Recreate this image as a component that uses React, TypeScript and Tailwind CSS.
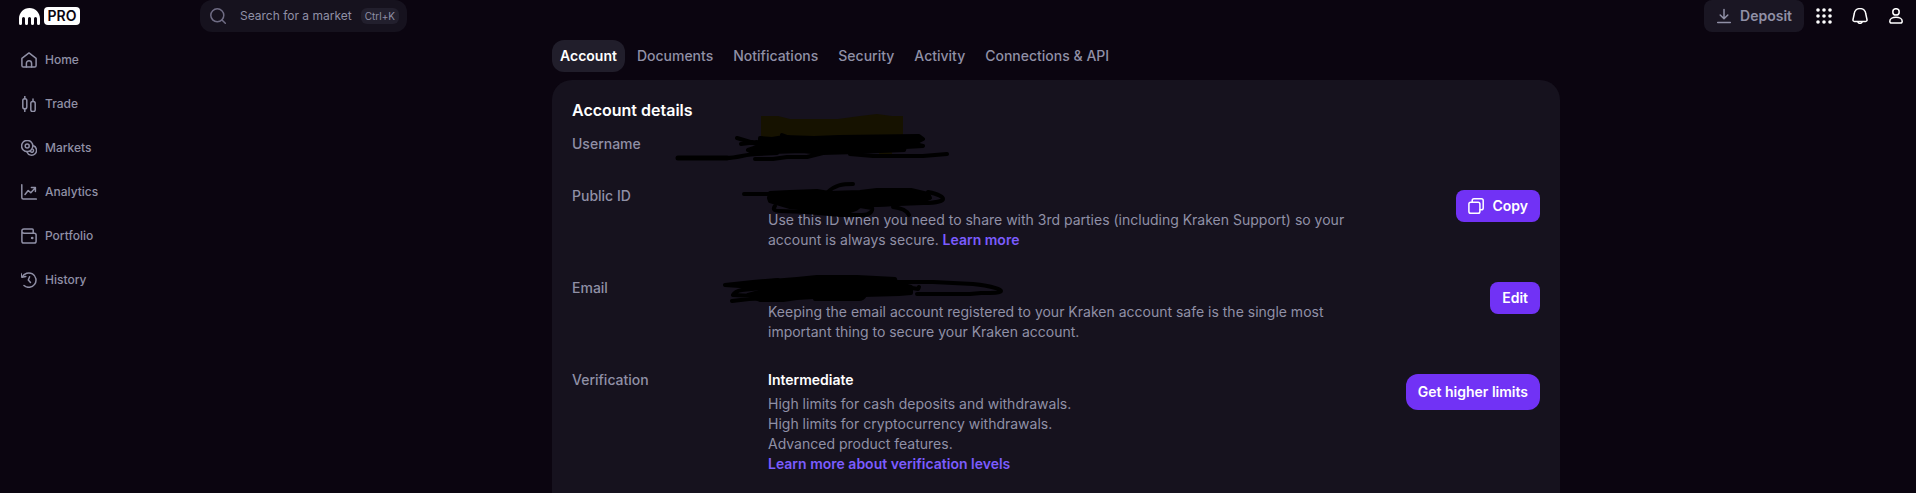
import React from "react";

type IconProps = { className?: string };

const line = {
  viewBox: "0 0 16 16",
  fill: "none",
  stroke: "currentColor",
  strokeWidth: 1.5,
  strokeLinecap: "round" as const,
  strokeLinejoin: "round" as const,
  "aria-hidden": true,
};

function HomeIcon({ className }: IconProps) {
  return (
    <svg {...line} className={className}>
      <path d="M.9 6.3 8 .9l7.100 5.400v7.200c0 .9-.6 1.600-1.500 1.600H2.400c-.9 0-1.500-.7-1.500-1.600z" />
      <path d="M5.400 15v-3.600a2.600 2.600 0 0 1 5.200 0V15" />
    </svg>
  );
}

function TradeIcon({ className }: IconProps) {
  return (
    <svg {...line} className={className}>
      <rect x="1.8" y="2.8" width="4" height="10" rx="1.8" />
      <path d="M3.8 0v2.800M3.800 12.800V15.500" />
      <rect x="9.8" y="5.6" width="4.4" height="10" rx="1.8" />
      <path d="M12 3v2.600" />
    </svg>
  );
}

function MarketsIcon({ className }: IconProps) {
  return (
    <svg {...line} className={className}>
      <circle cx="6.2" cy="6" r="5.6" />
      <circle cx="6.2" cy="6" r="2" />
      <path d="M12.500 5.800a4.900 4.900 0 1 1-6.400 6.400" />
      <path d="M11.900 9.400a1.600 1.600 0 1 1-2.400 2" />
    </svg>
  );
}

function AnalyticsIcon({ className }: IconProps) {
  return (
    <svg {...line} className={className}>
      <path d="M.8 .8v12.800c0 .9.6 1.500 1.500 1.500h13" />
      <path d="m4 10.500 3.200-4 2.600 2.300 4.600-5M10.400 3.600h4v4" />
    </svg>
  );
}

function PortfolioIcon({ className }: IconProps) {
  return (
    <svg {...line} className={className}>
      <path d="M.9 3v10.300c0 1 .8 1.800 1.800 1.800h10.600c1 0 1.800-.8 1.800-1.800V7c0-1-.8-1.800-1.800-1.800H3A2.100 2.100 0 0 1 3 .9h8.200c.6 0 1 .4 1 1v3.300" />
      <circle cx="11.2" cy="10" r=".6" fill="currentColor" />
    </svg>
  );
}

function HistoryIcon({ className }: IconProps) {
  return (
    <svg {...line} className={className}>
      <path d="M1.300 5A7.200 7.200 0 1 1 3 13.500" />
      <path d="M0 1.600 1 5.300l3.800-.8" />
      <path d="M8.600 4.800 7.300 8l2.200 2.500" />
    </svg>
  );
}

function SearchIcon({ className }: IconProps) {
  return (
    <svg {...line} className={className}>
      <circle cx="7.3" cy="7.3" r="6.5" />
      <path d="m12 12 3.300 3.300" />
    </svg>
  );
}

function DepositIcon({ className }: IconProps) {
  return (
    <svg {...line} className={className}>
      <path d="M8 1.500v9M4.200 7 8 10.800 11.800 7M1.700 14.500h12.600" />
    </svg>
  );
}

function GridIcon({ className }: IconProps) {
  return (
    <svg viewBox="0 0 16 16" fill="currentColor" className={className} aria-hidden>
      {[2, 8, 14].map((y) => [2, 8, 14].map((x) => <circle key={`${x}-${y}`} cx={x} cy={y} r="1.8" />))}
    </svg>
  );
}

function BellIcon({ className }: IconProps) {
  return (
    <svg {...line} className={className}>
      <path d="M8 .6c-3.300 0-5.600 2.300-5.800 5.400L1 11.600c-.2 1 .4 1.800 1.400 1.800h11.200c1 0 1.600-.8 1.400-1.800L13.800 6C13.600 2.900 11.300.6 8 .6z" />
      <path d="M5.800 13.800c.4 1.100 1.200 1.600 2.200 1.600s1.800-.5 2.200-1.600" />
    </svg>
  );
}

function ProfileIcon({ className }: IconProps) {
  return (
    <svg {...line} className={className}>
      <circle cx="8" cy="3.9" r="3.2" />
      <path d="M1.800 13.300c0-2.300 2.700-4 6.200-4s6.200 1.700 6.200 4c0 1.100-.7 1.800-1.700 1.800h-9c-1 0-1.700-.7-1.700-1.800z" />
    </svg>
  );
}

function CopyIcon({ className }: IconProps) {
  return (
    <svg {...line} className={className}>
      <rect x=".9" y="4.2" width="11" height="11" rx="1.8" />
      <path d="M4.200 4V2.600c0-1 .8-1.800 1.800-1.800h7.400c1 0 1.800.8 1.800 1.800V10c0 1-.8 1.800-1.800 1.800H12" />
    </svg>
  );
}

function Logo() {
  return (
    <a href="#" aria-label="Kraken Pro" className="flex items-center gap-1">
      <svg viewBox="0 0 21 17" className="h-[17px] w-[21px]" fill="#fff" aria-hidden>
        <path d="M10.500 0C4.700 0 0 4.700 0 10.500v5a1.500 1.500 0 0 0 3 0v-5a1.500 1.500 0 0 1 3 0v5a1.500 1.500 0 0 0 3 0v-5a1.500 1.500 0 0 1 3 0v5a1.500 1.500 0 0 0 3 0v-5a1.500 1.500 0 0 1 3 0v5a1.500 1.500 0 0 0 3 0v-5C21 4.700 16.300 0 10.500 0z" />
      </svg>
      <span className="flex h-[18px] w-9 items-center justify-center rounded-sm bg-white text-sm font-semibold text-[#0b0510]">PRO</span>
    </a>
  );
}

const menu = [
  { label: "Home", Icon: HomeIcon },
  { label: "Trade", Icon: TradeIcon },
  { label: "Markets", Icon: MarketsIcon },
  { label: "Analytics", Icon: AnalyticsIcon },
  { label: "Portfolio", Icon: PortfolioIcon },
  { label: "History", Icon: HistoryIcon },
];

const tabs = ["Account", "Documents", "Notifications", "Security", "Activity", "Connections & API"];

// marker strokes that hide the private values
function Scribble({ children }: { children: React.ReactNode }) {
  return (
    <svg
      className="pointer-events-none absolute left-0 top-0 h-5 w-60 overflow-visible"
      viewBox="0 0 240 20"
      fill="none"
      stroke="#000"
      strokeWidth="4"
      strokeLinecap="round"
      strokeLinejoin="round"
      aria-hidden
    >
      {children}
    </svg>
  );
}

function UsernameScribble() {
  return (
    <Scribble>
      <path stroke="none" fill="#161200" d="M-7-18h17l12 3h48l22-3 17-2 15 2h11V4H-7zM111 14h13v6h-13z" />
      <path fill="#000" d="M-8 4 4 5l12-2 30 1 25-1 80-1 4 3-6 3-2 2 8 2-18 1-1 3-24 1-24 1-34 1-20-2-30 1-22-1-2-1 12-4z" />
      <path d="m-31 4 20 6M-27 10l16-2M-90 24h49c10 0 20-4 30-4l20-1M-13 25H5l14-2h20l16-4M14 1l8 3M82 20l23 2h50l24-2" />
      <path strokeWidth="5" d="M-90 24h49" />
    </Scribble>
  );
}

function PublicIdScribble() {
  return (
    <Scribble>
      <path fill="#000" d="m2 7 20-1 27-1 12 2 31-1 17-2h34l17 4 2 4-8 3-32 3-30 2-4 3-8 3H48l-8-3-18-2L2 15l-1-3z" />
      <path d="M-24 8H5M60 6c7-7 14-8 25-8M160 6c10 2 15 5 15 7s-8 4-20 4l-50 2" />
      <path d="M7 20c-3 4 0 5 5 5l27 1 33 3h22c8 0 11-4 10-7l-12-2M125 21c9 1 14 4 16 8" />
    </Scribble>
  );
}

function EmailScribble() {
  return (
    <Scribble>
      <path fill="#000" d="m4 3 25-2 20-2h40l38 2 1 4 15 4v6l-12 1-36 1-33 1-33 2-14 2H-8l-12-5 15-4 8-5z" />
      <path d="M10 2-15 4l-28 3 15 1L4 6M4 9l-30 3c-6 1-8 3-9 5l20 1M-36 23l17-2 20-1" />
      <path d="M128 4h37l40 2c18 2 28 5 28 7s-8 2-20 2l-11 1h-53M144 10l6 1 1-2M47 21h44c4 0 5-2 6-4" />
    </Scribble>
  );
}

function Row({ label, children, action }: { label: string; children: React.ReactNode; action?: React.ReactNode }) {
  return (
    <div className="flex min-h-6 items-start">
      <dt className="w-[196px] shrink-0 font-medium">{label}</dt>
      <dd className="relative min-h-5 max-w-[580px] flex-1">{children}</dd>
      {action && <dd className="ml-auto h-0 pt-1">{action}</dd>}
    </div>
  );
}

function App() {
  return (
    <div className="min-h-screen bg-[#0b0510] font-['Inter',sans-serif] text-sm leading-5 text-[#9090a6]">
      {/* header */}
      <header className="flex h-8 items-center">
        <div className="w-[200px] shrink-0 pl-[19px]">
          <Logo />
        </div>
        <label className="flex h-8 w-[207px] items-center rounded-xl bg-[#16121e] pr-2 pl-2.5">
          <SearchIcon className="size-4 shrink-0 text-[#6f6c84]" />
          <input
            type="text"
            aria-label="Search for a market"
            placeholder="Search for a market"
            className="ml-3.5 w-0 min-w-0 flex-1 bg-transparent text-xs outline-none placeholder:text-[#9090a6]"
          />
          <kbd className="flex h-4 items-center rounded-md bg-[#221f2d] px-1 font-['Inter',sans-serif] text-[10px]">Ctrl+K</kbd>
        </label>
        <div className="ml-auto flex items-center pr-3">
          <button className="mr-3 flex h-8 items-center gap-2 rounded-lg bg-[#1a1623] px-3 font-semibold">
            <DepositIcon className="size-4" />
            Deposit
          </button>
          <div className="flex gap-5 text-white">
            <button aria-label="Apps">
              <GridIcon className="size-4" />
            </button>
            <button aria-label="Notifications">
              <BellIcon className="size-4" />
            </button>
            <button aria-label="Profile">
              <ProfileIcon className="size-4" />
            </button>
          </div>
        </div>
      </header>

      <div className="flex">
        {/* sidebar */}
        <nav className="w-[196px] shrink-0 pt-1.5">
          <ul>
            {menu.map(({ label, Icon }) => (
              <li key={label}>
                <a href="#" className="flex h-11 items-center gap-2 pl-[21px] text-xs font-medium">
                  <Icon className="size-4" />
                  {label}
                </a>
              </li>
            ))}
          </ul>
        </nav>

        {/* content */}
        <main className="mx-auto flex min-h-[461px] w-full max-w-[1008px] flex-col pt-2">
          <nav className="flex gap-1">
            {tabs.map((tab) => (
              <a
                key={tab}
                href="#"
                className={
                  tab === "Account"
                    ? "flex h-8 items-center rounded-xl bg-[#211e2b] px-2 font-semibold text-white"
                    : "flex h-8 items-center px-2 font-medium"
                }
              >
                {tab}
              </a>
            ))}
          </nav>

          <section className="mt-2 flex-1 rounded-t-[20px] bg-[#16121e] px-5 pt-5">
            <h2 className="text-base leading-5 font-semibold text-white">Account details</h2>
            <dl className="mt-3.5 flex flex-col gap-7">
              <Row label="Username">
                <UsernameScribble />
              </Row>
              <Row
                label="Public ID"
                action={
                  <button className="flex h-8 items-center gap-2 rounded-lg bg-[#7132f5] px-3 font-semibold text-white">
                    <CopyIcon className="size-4" />
                    Copy
                  </button>
                }
              >
                <p className="mt-6">
                  Use this ID when you need to share with 3rd parties (including Kraken Support) so your account is always secure.{" "}
                  <a href="#" className="font-semibold text-[#7b5cff]">
                    Learn more
                  </a>
                </p>
                <PublicIdScribble />
              </Row>
              <Row
                label="Email"
                action={<button className="h-8 rounded-lg bg-[#7132f5] px-3 font-semibold text-white">Edit</button>}
              >
                <p className="mt-6">
                  Keeping the email account registered to your Kraken account safe is the single most important thing to secure your Kraken account.
                </p>
                <EmailScribble />
              </Row>
              <Row
                label="Verification"
                action={<button className="h-9 rounded-xl bg-[#7132f5] px-3 font-semibold text-white">Get higher limits</button>}
              >
                <p className="mb-1 font-semibold text-white">Intermediate</p>
                <p>High limits for cash deposits and withdrawals.</p>
                <p>High limits for cryptocurrency withdrawals.</p>
                <p>Advanced product features.</p>
                <a href="#" className="font-semibold text-[#7b5cff]">
                  Learn more about verification levels
                </a>
              </Row>
            </dl>
          </section>
        </main>
      </div>
    </div>
  );
}

export default App;
